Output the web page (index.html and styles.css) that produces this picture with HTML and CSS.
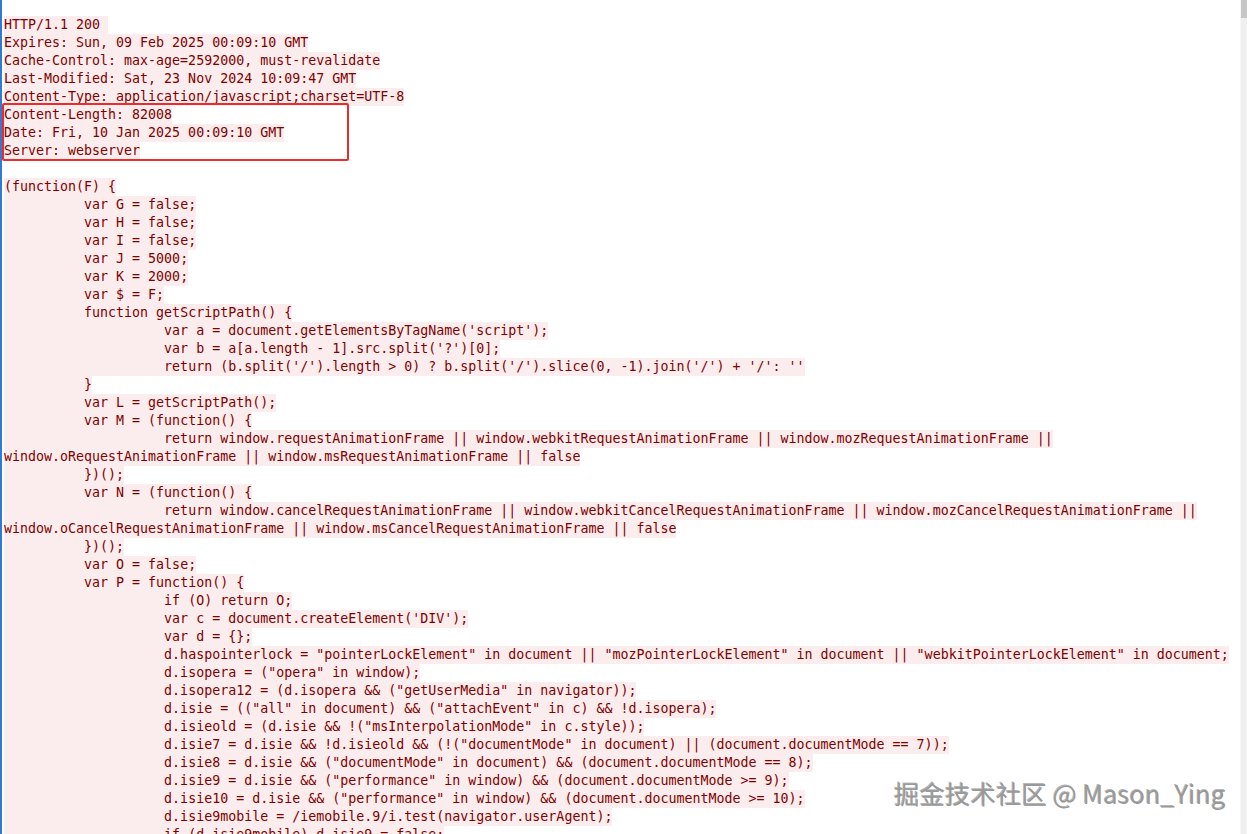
FILE: index.html
```
<!DOCTYPE html>
<html lang="en">
<head>
<meta charset="utf-8">
<title>Follow HTTP Stream</title>
<link rel="stylesheet" href="styles.css">
</head>
<body>
<div class="window">
  <div class="stream">
    <div class="line"><span class="seg">HTTP/1.1 200 </span></div>
    <div class="line"><span class="seg">Expires: Sun, 09 Feb 2025 00:09:10 GMT</span></div>
    <div class="line"><span class="seg">Cache-Control: max-age=2592000, must-revalidate</span></div>
    <div class="line"><span class="seg">Last-Modified: Sat, 23 Nov 2024 10:09:47 GMT</span></div>
    <div class="line"><span class="seg">Content-Type: application/javascript;charset=UTF-8</span></div>
    <div class="line"><span class="seg">Content-Length: 82008</span></div>
    <div class="line"><span class="seg">Date: Fri, 10 Jan 2025 00:09:10 GMT</span></div>
    <div class="line"><span class="seg">Server: webserver</span></div>
    <div class="line"></div>
    <div class="line"><span class="seg">(function(F) {</span></div>
    <div class="line"><span class="seg">	var G = false;</span></div>
    <div class="line"><span class="seg">	var H = false;</span></div>
    <div class="line"><span class="seg">	var I = false;</span></div>
    <div class="line"><span class="seg">	var J = 5000;</span></div>
    <div class="line"><span class="seg">	var K = 2000;</span></div>
    <div class="line"><span class="seg">	var $ = F;</span></div>
    <div class="line"><span class="seg">	function getScriptPath() {</span></div>
    <div class="line"><span class="seg">		var a = document.getElementsByTagName('script');</span></div>
    <div class="line"><span class="seg">		var b = a[a.length - 1].src.split('?')[0];</span></div>
    <div class="line"><span class="seg">		return (b.split('/').length &gt; 0) ? b.split('/').slice(0, -1).join('/') + '/': ''</span></div>
    <div class="line"><span class="seg">	}</span></div>
    <div class="line"><span class="seg">	var L = getScriptPath();</span></div>
    <div class="line"><span class="seg">	var M = (function() {</span></div>
    <div class="line"><span class="seg">		return window.requestAnimationFrame || window.webkitRequestAnimationFrame || window.mozRequestAnimationFrame ||</span></div>
    <div class="line"><span class="seg">window.oRequestAnimationFrame || window.msRequestAnimationFrame || false</span></div>
    <div class="line"><span class="seg">	})();</span></div>
    <div class="line"><span class="seg">	var N = (function() {</span></div>
    <div class="line"><span class="seg">		return window.cancelRequestAnimationFrame || window.webkitCancelRequestAnimationFrame || window.mozCancelRequestAnimationFrame ||</span></div>
    <div class="line"><span class="seg">window.oCancelRequestAnimationFrame || window.msCancelRequestAnimationFrame || false</span></div>
    <div class="line"><span class="seg">	})();</span></div>
    <div class="line"><span class="seg">	var O = false;</span></div>
    <div class="line"><span class="seg">	var P = function() {</span></div>
    <div class="line"><span class="seg">		if (O) return O;</span></div>
    <div class="line"><span class="seg">		var c = document.createElement('DIV');</span></div>
    <div class="line"><span class="seg">		var d = {};</span></div>
    <div class="line"><span class="seg">		d.haspointerlock = "pointerLockElement" in document || "mozPointerLockElement" in document || "webkitPointerLockElement" in document;</span></div>
    <div class="line"><span class="seg">		d.isopera = ("opera" in window);</span></div>
    <div class="line"><span class="seg">		d.isopera12 = (d.isopera &amp;&amp; ("getUserMedia" in navigator));</span></div>
    <div class="line"><span class="seg">		d.isie = (("all" in document) &amp;&amp; ("attachEvent" in c) &amp;&amp; !d.isopera);</span></div>
    <div class="line"><span class="seg">		d.isieold = (d.isie &amp;&amp; !("msInterpolationMode" in c.style));</span></div>
    <div class="line"><span class="seg">		d.isie7 = d.isie &amp;&amp; !d.isieold &amp;&amp; (!("documentMode" in document) || (document.documentMode == 7));</span></div>
    <div class="line"><span class="seg">		d.isie8 = d.isie &amp;&amp; ("documentMode" in document) &amp;&amp; (document.documentMode == 8);</span></div>
    <div class="line"><span class="seg">		d.isie9 = d.isie &amp;&amp; ("performance" in window) &amp;&amp; (document.documentMode &gt;= 9);</span></div>
    <div class="line"><span class="seg">		d.isie10 = d.isie &amp;&amp; ("performance" in window) &amp;&amp; (document.documentMode &gt;= 10);</span></div>
    <div class="line"><span class="seg">		d.isie9mobile = /iemobile.9/i.test(navigator.userAgent);</span></div>
    <div class="line"><span class="seg">		if (d.isie9mobile) d.isie9 = false;</span></div>
  </div>
  <div class="scrollbar"><div class="thumb"></div></div>
  <div class="mark-box"></div>
  <div class="watermark">掘金技术社区 @ Mason_Ying</div>
</div>
</body>
</html>
```
FILE: styles.css
```
html, body {
  margin: 0;
  padding: 0;
  background: #ffffff;
}

.window {
  position: relative;
  display: flex;
  width: 1247px;
  height: 834px;
  overflow: hidden;
  background: #ffffff;
}

.stream {
  flex: 1;
  min-width: 0;
  border-left: 2px solid #3179d3;
  padding: 16px 0 0 2px;
  font-family: "DejaVu Sans Mono", "Liberation Mono", monospace;
  font-size: 13.3px;
  color: #800000;
  overflow: hidden;
}

.line {
  height: 18px;
  white-space: pre;
  tab-size: 10;
  -moz-tab-size: 10;
}

.seg {
  display: inline-block;
  height: 18px;
  line-height: 18px;
  vertical-align: top;
  background: #fbeded;
  white-space: pre;
  tab-size: 10;
}

.scrollbar {
  width: 6px;
  flex: none;
  background: #f0f0f0;
  border-left: 1px solid #f7f7f7;
}

.thumb {
  height: 18px;
  background: #c6c6c6;
}

.mark-box {
  position: absolute;
  left: 2px;
  top: 103px;
  width: 347px;
  height: 58px;
  box-sizing: border-box;
  border: 2px solid #ee2a2a;
  border-radius: 2px;
}

.watermark {
  position: absolute;
  left: 894px;
  top: 775px;
  font-family: "Noto Sans CJK SC", "Noto Sans", sans-serif;
  font-size: 25.5px;
  line-height: 36px;
  color: #999999;
  white-space: nowrap;
  text-shadow: -1px -1px 0 rgba(0, 0, 0, 0.28), 1px 1px 0 #ffffff;
}
```
